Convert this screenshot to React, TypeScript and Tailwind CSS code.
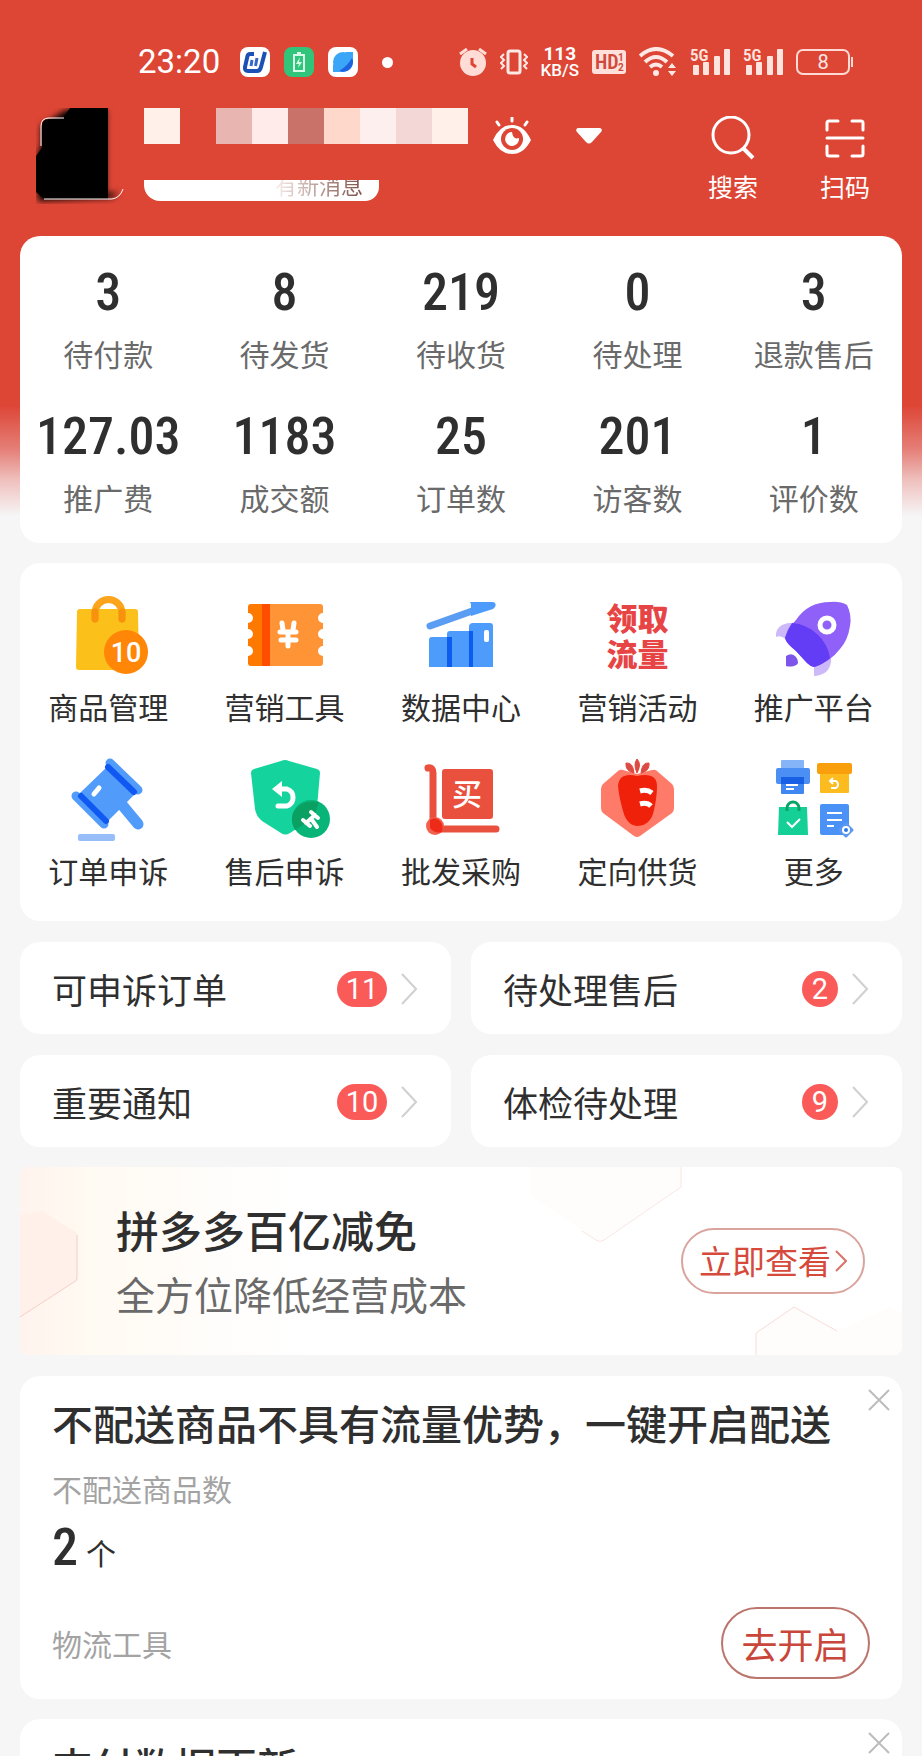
import type { ReactNode } from "react";
import clsx from "clsx";

/* ---------- status bar ---------- */

function SignalIcon() {
  return (
    <svg width="40" height="30" viewBox="0 0 40 30" fill="#ffe3de">
      <text x="0" y="14" fontSize="17" fontWeight="600" fontFamily="Roboto Condensed, Roboto">5G</text>
      <rect x="3" y="18" width="6" height="10" rx="1" />
      <rect x="13" y="15" width="6" height="13" rx="1" />
      <rect x="24" y="9" width="6" height="19" rx="1" />
      <rect x="34" y="2" width="6" height="26" rx="1" />
    </svg>
  );
}

function StatusBar() {
  return (
    <div className="flex h-8 items-center justify-between pl-[138px] pr-[68px] text-white">
      <div className="flex items-center">
        <span className="font-[Roboto] text-[33px] leading-8">23:20</span>
        <div className="ml-5 flex gap-[14px]">
          <svg width="30" height="30" viewBox="0 0 30 30" fill="none">
            <rect width="30" height="30" rx="8" fill="#fff" />
            <path d="M14 7H10Q8 7 7.500 9L5 20Q4.500 24 8 24H17Q20 24 21 20L25 5" stroke="#1b50b5" strokeWidth="4" />
            <path d="M12 13L11 19M17 11L15.500 19" stroke="#3568c8" strokeWidth="3" />
          </svg>
          <svg width="30" height="30" viewBox="0 0 30 30" fill="none">
            <rect width="30" height="30" rx="8" fill="#30c57b" />
            <path d="M10 8H20V24H10ZM13 6H17" stroke="#d8fbe9" strokeWidth="2" />
            <path d="M16 10L12 17H15L14 21L18 15H15Z" fill="#d8fbe9" />
          </svg>
          <svg width="30" height="30" viewBox="0 0 30 30" fill="none">
            <rect width="30" height="30" rx="8" fill="#fff" />
            <circle cx="15" cy="15" r="10" fill="#3ba6f8" />
            <path d="M25 9V15A10 10 0 0 1 11 24Q20 19 25 9Z" fill="#1d62e0" />
            <path d="M17 5H25V13ZM5 17V25H13Z" fill="#3ba6f8" />
          </svg>
        </div>
        <span className="ml-6 size-[11px] rounded-full bg-white" />
      </div>

      <div className="flex items-center gap-[13px]">
        <svg width="28" height="30" viewBox="0 0 28 30" fill="none">
          <circle cx="14" cy="16" r="13" fill="#ffdcd6" />
          <path d="M1 7L8 2M27 7L20 2" stroke="#ffdcd6" strokeWidth="3" />
          <path d="M13 11V17L17 20" stroke="#dd4535" strokeWidth="3" />
        </svg>
        <svg width="28" height="26" viewBox="0 0 28 26" fill="none" stroke="#ffe9e5" strokeWidth="3">
          <rect x="8" y="2" width="12" height="22" rx="2" />
          <path d="M4 5L1 8L4 11L1 14L4 17L1 20M24 5L27 8L24 11L27 14L24 17L27 20" strokeWidth="2" />
        </svg>
        <div className="flex flex-col items-center font-[Roboto]">
          <span className="text-[19px] font-bold leading-4">113</span>
          <span className="text-[17px] font-medium leading-4">KB/S</span>
        </div>
        <svg width="34" height="24" viewBox="0 0 34 24">
          <rect width="34" height="24" rx="3" fill="#ffe0da" />
          <text x="3" y="19" fontSize="20" fontWeight="600" fontFamily="Roboto Condensed, Liberation Sans Narrow, Roboto" fill="#cf4a3c">HD</text>
          <text x="26" y="11" fontSize="10" fontWeight="700" fontFamily="Roboto" fill="#cf4a3c">1</text>
          <text x="26" y="21" fontSize="10" fontWeight="700" fontFamily="Roboto" fill="#cf4a3c">2</text>
        </svg>
        <svg width="38" height="30" viewBox="0 0 38 30" fill="none" stroke="#ffe9e5" strokeWidth="4">
          <path d="M1 9Q17 -5 34 9M6 15Q17 5 28 15M11 20Q17 15 23 20" />
          <circle cx="17" cy="26" r="3" fill="#ffe9e5" stroke="none" />
          <path d="M29 21L33 16L37 21ZM29 24L33 29L37 24Z" fill="#ffe9e5" stroke="none" />
        </svg>
        <SignalIcon />
        <SignalIcon />
        <svg width="58" height="26" viewBox="0 0 58 26" fill="none" stroke="#ffd9d3" strokeWidth="2">
          <rect x="1" y="1" width="52" height="24" rx="6" />
          <path d="M56 8V18" />
          <text x="27" y="20" fontSize="20" textAnchor="middle" fontFamily="Roboto" fill="#ffe9e5" stroke="none">8</text>
        </svg>
      </div>
    </div>
  );
}

/* ---------- shop header ---------- */

const mosaic = [
  "bg-[#fff0ea]",
  "bg-transparent",
  "bg-[#e8b5b0]",
  "bg-[#ffecea]",
  "bg-[#c9726a]",
  "bg-[#fdd8cb]",
  "bg-[#fcefee]",
  "bg-[#f3d6d6]",
  "bg-[#fff1ea]",
];

function ShopHeader() {
  return (
    <div className="flex h-32 items-start pl-9 pr-[52px] text-white">
      <svg width="90" height="96" viewBox="0 0 90 96" fill="none" className="shrink-0">
        <defs>
          <filter id="soft" x="-20%" y="-20%" width="140%" height="140%">
            <feGaussianBlur stdDeviation="3" />
          </filter>
        </defs>
        <path d="M5 40V18L30 2H70V86L82 84L76 90L2 93L2 42Z" fill="#000" filter="url(#soft)" />
        <path d="M6 18Q6 11 13 11H26L34 0H72V91H8L0 84V48L6 40Z" fill="#000" />
        <path d="M5 38V18Q5 10 13 10H28" stroke="#fff" />
        <path d="M8 91H76Q84 90 87 81" stroke="#fff" />
      </svg>

      <div className="ml-[18px]">
        <div className="flex">
          {mosaic.map((tone, i) => (
            <span key={i} className={clsx("size-9", tone)} />
          ))}
        </div>
        <div className="mt-9 flex h-[21px] w-[235px] justify-end overflow-hidden rounded-bl-[16px] rounded-br-[14px] bg-white pr-4">
          <span className="-mt-[11px] bg-linear-to-r from-[#f8efec] to-[#7a4f45] bg-clip-text text-[22px] leading-[30px] text-transparent">
            有新消息
          </span>
        </div>
      </div>

      <button type="button" aria-label="显示" className="ml-6 mt-[9px]">
        <svg width="40" height="38" viewBox="0 0 40 38" fill="none">
          <path d="M1 23Q8 8 20 8Q32 8 39 23Q32 37 20 37Q8 37 1 23Z" fill="#fff" />
          <circle cx="20" cy="22" r="11" fill="#dd4535" />
          <path d="M20 15A7 7 0 1 0 27 21Q21 23 20 15Z" fill="#fff" />
          <path d="M20 1V4M5 5L7 8M35 5L33 8" stroke="#fff" strokeWidth="3" strokeLinecap="round" />
        </svg>
      </button>
      <button type="button" aria-label="切换店铺" className="ml-11 mt-5">
        <svg width="26" height="16" viewBox="0 0 26 16" fill="#fff">
          <path d="M2 0H24Q27 1 25 4L16 14Q13 17 10 14L1 4Q-1 1 2 0Z" />
        </svg>
      </button>

      <div className="ml-auto mt-2 flex gap-[62px]">
        <button type="button" className="flex flex-col items-center">
          <svg width="44" height="44" viewBox="0 0 44 44" fill="none" stroke="#fff" strokeWidth="3">
            <circle cx="20" cy="19" r="18" />
            <path d="M32 32L42 42" strokeWidth="4" />
          </svg>
          <span className="mt-[10px] text-[25px] leading-8">搜索</span>
        </button>
        <button type="button" className="flex flex-col items-center">
          <svg width="44" height="44" viewBox="0 0 44 44" fill="none" stroke="#fff" strokeWidth="3" strokeLinecap="round">
            <path d="M4 14V7Q4 5 6 5H15M29 5H38Q40 5 40 7V14M4 30V38Q4 40 6 40H15M29 40H38Q40 40 40 38V30M4 22H40" />
          </svg>
          <span className="mt-[10px] text-[25px] leading-8">扫码</span>
        </button>
      </div>
    </div>
  );
}

/* ---------- store numbers ---------- */

const stats = [
  { value: "3", label: "待付款" },
  { value: "8", label: "待发货" },
  { value: "219", label: "待收货" },
  { value: "0", label: "待处理" },
  { value: "3", label: "退款售后" },
  { value: "127.03", label: "推广费" },
  { value: "1183", label: "成交额" },
  { value: "25", label: "订单数" },
  { value: "201", label: "访客数" },
  { value: "1", label: "评价数" },
];

function StatsCard() {
  return (
    <div className="mx-5 grid grid-cols-5 gap-y-8 rounded-[20px] bg-white pb-[22px] pt-[29px]">
      {stats.map((s) => (
        <a key={s.label} href="#" className="flex flex-col items-center">
          <span className="font-['Roboto_Condensed','Liberation_Sans_Narrow',Roboto,sans-serif] text-[52px] font-medium leading-[56px]">
            {s.value}
          </span>
          <span className="mt-2 whitespace-nowrap text-[30px] font-normal leading-[48px] text-[#6a6a6a]">
            {s.label}
          </span>
        </a>
      ))}
    </div>
  );
}

/* ---------- tools ---------- */

function Icon({ children }: { children: ReactNode }) {
  return (
    <svg width="80" height="80" viewBox="0 0 80 80" fill="none" className="overflow-visible">
      {children}
    </svg>
  );
}

function GoodsIcon() {
  return (
    <Icon>
      <path d="M12 14H67Q70 14 70 17L71 72Q71 75 68 75H11Q8 75 8 72L9 17Q9 14 12 14Z" fill="#fcc01a" />
      <path d="M27 24V18A13 13 0 0 1 54 18V24" stroke="#fba41c" strokeWidth="7" strokeLinecap="round" />
      <path d="M27 17V24M54 17V24" stroke="#f8920c" strokeWidth="7" strokeLinecap="round" />
      <circle cx="58" cy="57" r="22" fill="#ff8606" />
      <text x="58" y="67" fontSize="27" fontWeight="500" textAnchor="middle" fontFamily="Roboto" fill="#fff">10</text>
    </Icon>
  );
}

function CouponIcon() {
  return (
    <Icon>
      <path d="M6 9H18V71H6Q3 71 3 68V61A5 5 0 0 0 3 51V44A5 5 0 0 0 3 34V28A5 5 0 0 0 3 18V12Q3 9 6 9Z" fill="#ff7800" />
      <path d="M17 9H25V71H17Z" fill="#ff4d00" />
      <path d="M25 9H75Q78 9 78 12V18A5 5 0 0 0 78 28V34A5 5 0 0 0 78 44V51A5 5 0 0 0 78 61V68Q78 71 75 71H25Z" fill="#ff9436" />
      <path d="M37 28L38 35M49 28L48 35M35 37H51M43 37V51M36 45H51" stroke="#fff" strokeWidth="5" strokeLinecap="round" />
    </Icon>
  );
}

function ChartIcon() {
  return (
    <Icon>
      <path d="M8 45Q8 42 11 42H31V72H8Z" fill="#4d9bfa" />
      <path d="M26 39Q26 36 29 36H51V72H26Z" fill="#4d9bfa" />
      <path d="M48 32Q48 28 52 28H69Q72 28 72 31V72H48Z" fill="#4d9bfa" />
      <path d="M26 42H31V72H26ZM48 36H52V72H48Z" fill="#0c5cf0" />
      <rect x="63" y="35" width="5" height="12" rx="2" fill="#fff" />
      <path d="M9 31L54 15" stroke="#5a9df2" strokeWidth="7" strokeLinecap="round" />
      <path d="M49 7H72Q76 8 74 12L72 14L50 21V9Z" fill="#4d9bfa" />
    </Icon>
  );
}

function TrafficIcon() {
  return (
    <span className="flex size-20 flex-col items-center justify-center whitespace-nowrap text-[31px] font-black leading-9 text-[#e74545]">
      <span>领取</span>
      <span>流量</span>
    </span>
  );
}

function RocketIcon() {
  return (
    <Icon>
      <path d="M2 42Q1 34 8 30Q14 27 24 28L12 44Q6 40 2 42Z" fill="#cdb8fa" />
      <path d="M40 71L57 60Q58 72 52 77Q46 81 40 81Z" fill="#cdb8fa" />
      <path d="M11 43Q14 33 22 25Q34 7 56 7Q66 6 73 10Q78 20 76 31Q74 45 66 54Q56 67 40 72Q36 71 33 68L22 56Q12 48 11 43Z" fill="#8f61f8" />
      <path d="M11 43Q13 35 18 28Q32 29 43 39Q54 49 56 63Q48 70 40 72Q36 71 33 68L22 56Q12 48 11 43Z" fill="#623df5" />
      <circle cx="53" cy="30" r="7" stroke="#fff" strokeWidth="5" />
      <path d="M12 61Q18 57 22 62Q27 69 20 71Q16 72 12 71Z" fill="#7d55ea" />
    </Icon>
  );
}

function GavelIcon() {
  return (
    <Icon>
      <path d="M40 7L68 34L40 62L12 34Z" fill="#519bfb" />
      <path d="M50 41L70 65" stroke="#519bfb" strokeWidth="11" strokeLinecap="round" />
      <path d="M42 4L70 31" stroke="#519bfb" strokeWidth="9" strokeLinecap="round" />
      <path d="M8 37L36 65" stroke="#519bfb" strokeWidth="9" strokeLinecap="round" />
      <path d="M40 8L66 33M13 37L38 62" stroke="#1058f2" strokeWidth="6" strokeLinecap="round" />
      <path d="M26 35L31 29" stroke="#fff" strokeWidth="5" strokeLinecap="round" />
      <rect x="10" y="75" width="37" height="7" rx="2" fill="#98befa" />
    </Icon>
  );
}

function ShieldIcon() {
  return (
    <Icon>
      <path d="M36 2Q40 0 44 2L72 10Q75 11 75 14L72 48Q71 56 65 61L45 74Q40 77 36 74L17 62Q11 57 10 50L6 14Q6 11 9 10Z" fill="#14d39d" />
      <path d="M33 30H42A9 9 0 0 1 42 47H33" stroke="#fff" strokeWidth="5" strokeLinecap="round" />
      <path d="M27 30L37 22V38Z" fill="#fff" />
      <circle cx="66" cy="60" r="19" fill="#08b578" />
      <path d="M74 43L72 48Q71 56 65 61L50 71Q45 62 48 54Q55 40 74 43Z" fill="#0aa062" />
      <path d="M66 53L73 59M58 61L65 67M70 56L61 64M67 61L72 68" stroke="#fff" strokeWidth="4" strokeLinecap="round" />
    </Icon>
  );
}

function CartIcon() {
  return (
    <Icon>
      <path d="M7 9Q12 8 12 14V66" stroke="#ea503e" strokeWidth="7" strokeLinecap="round" />
      <path d="M16 70H75" stroke="#ea503e" strokeWidth="7" strokeLinecap="round" />
      <rect x="21" y="10" width="51" height="50" rx="3" fill="#ea503e" />
      <text x="46" y="46" fontSize="30" fontWeight="500" textAnchor="middle" fontFamily="Noto Sans CJK SC" fill="#fff">买</text>
      <circle cx="14" cy="67" r="9" fill="#f4604f" />
      <path d="M9 61Q14 57 19 62Q23 66 21 73Q14 75 9 69Z" fill="#ee2a18" />
    </Icon>
  );
}

function CarrotIcon() {
  return (
    <Icon>
      <path d="M21 12Q23 10 26 11L40 15L55 11Q58 10 60 12L75 25Q77 27 77 30V49Q77 52 75 54L43 77Q40 79 37 77L6 54Q4 52 4 49V30Q4 27 6 25Z" fill="#ff7b69" />
      <path d="M40 17Q60 13 60 27Q60 38 57 51Q54 66 41 67Q30 67 26 52Q22 38 21 27Q22 13 40 17Z" fill="#f0210b" />
      <path d="M43 32Q50 30 55 34M43 45Q50 43 54 47" stroke="#fff" strokeWidth="5" />
      <path d="M40 0Q45 5 40 14Q36 5 40 0ZM29 4Q36 3 37 14Q28 12 29 4ZM52 4Q45 3 44 14Q53 12 52 4Z" fill="#dd4a42" stroke="#dd4a42" />
    </Icon>
  );
}

function MoreIcon() {
  return (
    <Icon>
      <rect x="7" y="1" width="23" height="20" rx="1" fill="#86b4f8" />
      <rect x="2" y="9" width="34" height="16" rx="2" fill="#4b8ff5" />
      <rect x="7" y="18" width="23" height="17" rx="1" fill="#4187f2" />
      <path d="M7 18H30V25H7Z" fill="#1760e6" />
      <path d="M12 26H24M12 30H20" stroke="#fff" strokeWidth="2" />

      <rect x="46" y="12" width="29" height="22" rx="1" fill="#fcbb1e" />
      <rect x="43" y="4" width="35" height="11" rx="2" fill="#fa9f0c" />
      <path d="M57 22H62A4 4 0 0 1 62 29H57M59 19L56 22L59 25" stroke="#fff" strokeWidth="2" />

      <path d="M5 48H33L34 76H4Z" fill="#14cf96" />
      <path d="M13 52V49A6 6 0 0 1 25 49V52" stroke="#0aa566" strokeWidth="3" />
      <path d="M13 63L18 68L26 60" stroke="#fff" strokeWidth="2" />

      <rect x="46" y="45" width="29" height="31" rx="2" fill="#4b92f6" />
      <path d="M53 54H68M53 61H68M53 67H60" stroke="#fff" strokeWidth="2" />
      <path d="M72 65L78 71L72 77L66 71Z" fill="#2f75e8" stroke="#5c98f2" strokeWidth="3" strokeLinejoin="round" />
      <circle cx="72" cy="71" r="3" stroke="#fff" strokeWidth="2" />
    </Icon>
  );
}

const tools = [
  { icon: <GoodsIcon />, label: "商品管理" },
  { icon: <CouponIcon />, label: "营销工具" },
  { icon: <ChartIcon />, label: "数据中心" },
  { icon: <TrafficIcon />, label: "营销活动" },
  { icon: <RocketIcon />, label: "推广平台" },
  { icon: <GavelIcon />, label: "订单申诉" },
  { icon: <ShieldIcon />, label: "售后申诉" },
  { icon: <CartIcon />, label: "批发采购" },
  { icon: <CarrotIcon />, label: "定向供货" },
  { icon: <MoreIcon />, label: "更多" },
];

function ToolsCard() {
  return (
    <div className="grid grid-cols-5 gap-y-[29px] rounded-[20px] bg-white pb-[27px] pt-8">
      {tools.map((t) => (
        <a key={t.label} href="#" className="flex flex-col items-center">
          {t.icon}
          <span className="mt-[7px] whitespace-nowrap text-[30px] font-normal leading-[48px]">{t.label}</span>
        </a>
      ))}
    </div>
  );
}

/* ---------- todo links ---------- */

const todos = [
  { label: "可申诉订单", count: 11 },
  { label: "待处理售后", count: 2 },
  { label: "重要通知", count: 10 },
  { label: "体检待处理", count: 9 },
];

function TodoGrid() {
  return (
    <div className="mt-[21px] grid grid-cols-2 gap-x-5 gap-y-[21px]">
      {todos.map((t) => (
        <a key={t.label} href="#" className="flex h-[92px] items-center rounded-[20px] bg-white pl-8 pr-[34px] pt-[2px]">
          <span className="text-[35px] font-normal leading-[48px]">{t.label}</span>
          <span
            className={clsx(
              "ml-auto flex h-9 items-center justify-center rounded-full bg-[#fa5a58] font-[Roboto] text-[29px] leading-9 text-white",
              t.count > 9 ? "w-[50px]" : "w-9",
            )}
          >
            {t.count}
          </span>
          <svg width="16" height="32" viewBox="0 0 16 32" fill="none" className="ml-[14px]">
            <path d="M1 1L15 16L1 31" stroke="#d0d0d0" strokeWidth="2" />
          </svg>
        </a>
      ))}
    </div>
  );
}

/* ---------- promo banner ---------- */

function PromoBanner() {
  return (
    <div className="relative mt-5 flex h-[188px] items-center justify-between overflow-hidden rounded-lg bg-white bg-[linear-gradient(90deg,#fff3ee_0,#fffaf2_70px,#fffdfb_200px,#fff_280px)] pl-24 pr-[37px]">
      <svg width="60" height="120" viewBox="0 0 60 120" fill="none" className="absolute left-0 top-9">
        <path d="M0 12L22 8L57 30V75Q57 78 54 79L0 114Z" fill="#fff0e9" />
        <path d="M57 32V75Q57 78 54 79L0 114" stroke="#f2cfc8" />
      </svg>
      <svg width="160" height="80" viewBox="0 0 160 80" fill="none" className="absolute right-[220px] top-0">
        <path d="M8 0V28L74 73Q78 76 82 73L159 20V0Z" fill="#fffdfc" />
        <path d="M60 64L74 73Q78 76 82 73L159 20V0" stroke="#f8e6e2" />
      </svg>
      <svg width="148" height="50" viewBox="0 0 148 50" fill="none" className="absolute bottom-0 right-0">
        <path d="M2 50V28L40 2L83 26L136 2L148 8V50Z" fill="#fffdfc" />
        <path d="M2 50V28L40 2L83 26" stroke="#f6dcd7" />
      </svg>

      <div className="relative">
        <p className="text-[43px] font-medium leading-[60px]">拼多多百亿减免</p>
        <p className="mt-1 text-[39px] font-normal leading-[60px] text-[#6a6a6a]">全方位降低经营成本</p>
      </div>
      <button
        type="button"
        className="relative flex h-[66px] w-[184px] items-center justify-center gap-1 rounded-full border-2 border-[#d9a49d] text-[33px] font-normal text-[#d64a3c]"
      >
        立即查看
        <svg width="12" height="22" viewBox="0 0 12 22" fill="none">
          <path d="M1 1L11 11L1 21" stroke="#d9736a" strokeWidth="2" />
        </svg>
      </button>
    </div>
  );
}

/* ---------- suggestion cards ---------- */

function SuggestionCard({ title, children }: { title: string; children?: ReactNode }) {
  return (
    <section className="relative rounded-[20px] bg-white px-8 py-5">
      <h2 className="whitespace-nowrap text-[41px] font-medium leading-[52px]">{title}</h2>
      <button type="button" aria-label="关闭" className="absolute right-3 top-[13px]">
        <svg width="22" height="22" viewBox="0 0 22 22" fill="none">
          <path d="M1 1L21 21M21 1L1 21" stroke="#bcbcbc" strokeWidth="2" />
        </svg>
      </button>
      {children}
    </section>
  );
}

export default function App() {
  return (
    <div className="h-screen overflow-hidden bg-[#f6f6f6] font-['Noto_Sans_CJK_SC',sans-serif] text-[#2f2f2f]">
      <header className="bg-[linear-gradient(#dd4535_405px,#e58079_450px,#efc0bd_480px,#f6f6f6_516px)] pt-[46px]">
        <StatusBar />
        <div className="mt-[30px]">
          <ShopHeader />
        </div>
        <StatsCard />
      </header>

      <main className="px-5 pt-5">
        <ToolsCard />
        <TodoGrid />
        <PromoBanner />

        <div className="mt-[21px] flex flex-col gap-5">
          <SuggestionCard title="不配送商品不具有流量优势，一键开启配送">
            <p className="mt-4 text-[30px] font-normal leading-[48px] text-[#a3a3a3]">不配送商品数</p>
            <p className="mt-2 flex items-baseline gap-2 leading-[56px]">
              <span className="font-['Roboto_Condensed','Liberation_Sans_Narrow',Roboto,sans-serif] text-[52px] font-medium">
                2
              </span>
              <span className="text-[30px]">个</span>
            </p>
            <div className="mt-[27px] flex items-center justify-between">
              <span className="text-[30px] font-normal text-[#a3a3a3]">物流工具</span>
              <button
                type="button"
                className="h-[72px] w-[149px] rounded-full border-2 border-[#bb756c] text-[36px] font-normal leading-[48px] text-[#c9473a]"
              >
                去开启
              </button>
            </div>
          </SuggestionCard>
          <SuggestionCard title="支付数据更新" />
        </div>
      </main>
    </div>
  );
}
